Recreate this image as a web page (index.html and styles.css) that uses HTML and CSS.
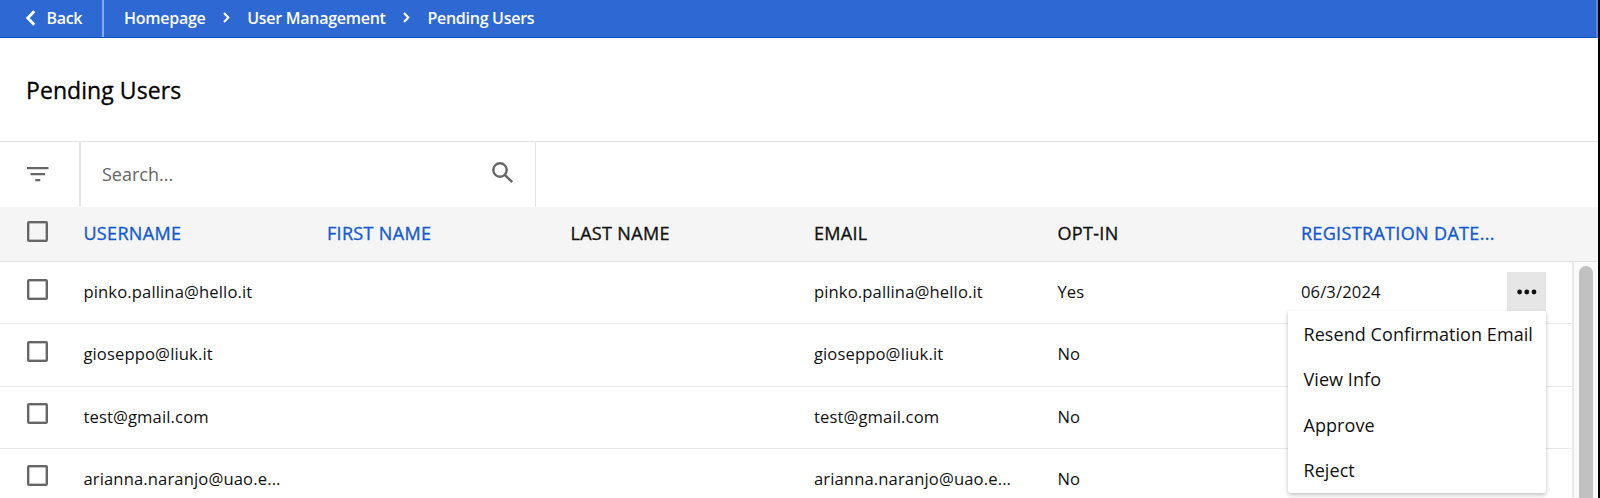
FILE: index.html
```html
<!DOCTYPE html>
<html lang="en">
<head>
<meta charset="utf-8">
<title>Pending Users</title>
<link rel="stylesheet" href="styles.css">
</head>
<body>
<div class="app">
  <nav class="topbar">
    <a class="back"><svg class="back-icon" width="10" height="16" viewBox="0 0 10 16"><path d="M8.3 1.2 1.8 8l6.5 6.8"/></svg><span>Back</span></a>
    <div class="crumbs">
      <span class="crumb crumb-home">Homepage</span>
      <svg class="sep" width="7" height="11" viewBox="0 0 7 11"><path d="M1 1l4.3 4.5L1 10"/></svg>
      <span class="crumb crumb-mgmt">User Management</span>
      <svg class="sep" width="7" height="11" viewBox="0 0 7 11"><path d="M1 1l4.3 4.5L1 10"/></svg>
      <span class="crumb">Pending Users</span>
    </div>
  </nav>
  <header class="page-head"><h1>Pending Users</h1></header>
  <div class="toolbar">
    <div class="filter"><svg width="22" height="16" viewBox="0 0 22 16"><path d="M0 1.2h21.5M3.5 7.2h14.5M8.3 13.2h5"/></svg></div>
    <div class="search"><span>Search...</span>
      <svg width="22" height="22" viewBox="0 0 22 22"><circle cx="8" cy="8" r="6.7"/><path d="M12.8 12.8l7.4 7.4"/></svg></div>
  </div>
  <div class="grid">
    <div class="row head">
      <i class="box"></i><span class="sortable">USERNAME</span><span class="sortable">FIRST NAME</span><span>LAST NAME</span><span>EMAIL</span><span>OPT-IN</span><span class="sortable">REGISTRATION DATE...</span>
    </div>
    <div class="body">
      <div class="rows">
        <div class="row">
          <i class="box"></i><span>pinko.pallina@hello.it</span><span></span><span></span><span>pinko.pallina@hello.it</span><span>Yes</span><span class="date">06/3/2024</span>
          <div class="more">
            <svg width="20" height="6" viewBox="0 0 20 6"><circle cx="2.6" cy="3" r="2.4"/><circle cx="9.8" cy="3" r="2.4"/><circle cx="17" cy="3" r="2.4"/></svg>
            <div class="menu"><span>Resend Confirmation Email</span><span>View Info</span><span>Approve</span><span>Reject</span></div>
          </div>
        </div>
        <div class="row"><i class="box"></i><span>gioseppo@liuk.it</span><span></span><span></span><span>gioseppo@liuk.it</span><span>No</span><span></span></div>
        <div class="row"><i class="box"></i><span>test@gmail.com</span><span></span><span></span><span>test@gmail.com</span><span>No</span><span></span></div>
        <div class="row"><i class="box"></i><span>arianna.naranjo@uao.e...</span><span></span><span></span><span>arianna.naranjo@uao.e...</span><span>No</span><span></span></div>
      </div>
      <div class="track"><div class="thumb"></div></div>
    </div>
  </div>
</div>
</body>
</html>
```
FILE: styles.css
```css
* { box-sizing: border-box; }
body { margin: 0; background: #000; font-family: "Open Sans", "Noto Sans", sans-serif; color: #111; }
svg { display: block; fill: none; flex: none; }
.app { width: 1598px; height: 498px; overflow: hidden; background: #fff; display: flex; flex-direction: column; }
.topbar { height: 38px; flex: none; display: flex; background: #2d68d3; border-bottom: 1px solid #0b4fc4; color: #fff; font-size: 16px; font-weight: 600; line-height: 36px; border-right: 2px solid #5c88dc; white-space: nowrap; }
.back { width: 104px; border-right: 2px solid #89a9e6; display: flex; align-items: center; padding-left: 26px; gap: 10.5px; letter-spacing: -.3px; height: 37px; }
.back-icon { stroke: #fff; stroke-width: 2.8; margin-top: -2px; }
.back span, .crumb { margin-top: -1px; }
.crumbs { display: flex; align-items: center; padding-left: 20px; height: 37px; letter-spacing: -.27px; }
.sep { stroke: #fff; stroke-width: 2.1; margin: -2px 17.4px 0; }
.page-head { height: 103px; flex: none; padding: 36px 26px 0; }
h1 { margin: 0; font-size: 23px; line-height: 32px; font-weight: 500; letter-spacing: .07px; color: #000; -webkit-text-stroke: .3px currentColor; }
.toolbar { height: 66px; flex: none; border-top: 1px solid #e2e2e2; display: flex; }
.filter { width: 81px; border-right: 2px solid #e6e6e6; padding: 25px 0 0 27px; }
.filter svg { stroke: #666; stroke-width: 2.2; }
.search { width: 455px; border-right: 1px solid #e2e2e2; display: flex; justify-content: space-between; padding: 20px 21px 0 21px; font-size: 18px; line-height: 24px; color: #666; }
.search svg { stroke: #666; stroke-width: 2.4; }
.grid { flex: 1; display: flex; flex-direction: column; min-height: 0; }
.row { position: relative; height: 62.3px; flex: none; display: grid; grid-template-columns: 56.4px repeat(5, 243.5px) 1fr; padding-left: 27px; border-bottom: 1px solid #e8e8e8; font-size: 16.6px; letter-spacing: .13px; line-height: 24px; white-space: nowrap; }
.row > span { padding-top: 18px; }
.box { width: 21px; height: 21px; margin-top: 16.5px; border: 2px solid #666; box-shadow: inset 0 0 0 .5px #888; border-radius: 2px; }
.head { height: 55px; background: #f5f5f5; font-size: 18px; font-weight: 500; letter-spacing: .34px; border-color: #e2e2e2; -webkit-text-stroke: .35px currentColor; }
.head > span { padding-top: 14px; }
.head .box { margin: 14px 0 0 .4px; }
.sortable { color: #1459d3; }
.body { display: flex; flex: 1; min-height: 0; }
.rows { flex: 1; }
.track { width: 26px; border-left: 2px solid #e9e9e9; background: #fafafa; padding: 4px 0 0 5px; }
.thumb { width: 14px; height: 240px; border-radius: 7px; background: #c1c1c1; }
.more { position: absolute; z-index: 2; left: 1507px; top: 10px; width: 39px; height: 39px; background: #e6e6e6; display: flex; align-items: center; justify-content: center; }
.more svg { fill: #111; }
.menu { position: absolute; top: 39px; right: 0; width: 258px; height: 182px; background: #fff; border-radius: 0 0 3px 3px; box-shadow: 0 2px 4px rgba(0,0,0,.25); padding: .6px 0 0 15.5px; display: flex; flex-direction: column; font-size: 18px; letter-spacing: .07px; line-height: 45.5px; }
```
